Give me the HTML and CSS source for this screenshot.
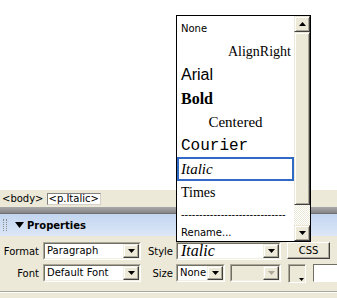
FILE: index.html
```html
<!DOCTYPE html>
<html>
<head>
<meta charset="utf-8">
<link rel="stylesheet" href="styles.css">
</head>
<body>
<div class="app">
  <div class="canvas"></div>
  <div class="tagbar">
    <span class="tag">&lt;body&gt;</span>
    <span class="tag current">&lt;p.Italic&gt;</span>
  </div>
  <div class="splitter"></div>
  <div class="panel-head">
    <span class="gripper"></span>
    <svg class="expander" width="9" height="6" viewBox="0 0 9 6"><polygon points="0,0 9,0 4.5,6" fill="#000"/></svg>
    <span class="head-title">Properties</span>
  </div>
  <div class="panel">
    <div class="row">
      <span class="lbl">Format</span>
      <div class="combo w-format"><div class="field"><span class="val">Paragraph</span><span class="drop"><svg width="7" height="4" viewBox="0 0 7 4"><polygon points="0,0 7,0 3.5,4" fill="#000"/></svg></span></div></div>
      <span class="lbl2">Style</span>
      <div class="combo w-style"><div class="field"><span class="val val-italic">Italic</span><span class="drop"><svg width="7" height="4" viewBox="0 0 7 4"><polygon points="0,0 7,0 3.5,4" fill="#000"/></svg></span></div></div>
      <button class="css-btn">CSS</button>
    </div>
    <div class="row">
      <span class="lbl">Font</span>
      <div class="combo w-format"><div class="field"><span class="val">Default Font</span><span class="drop"><svg width="7" height="4" viewBox="0 0 7 4"><polygon points="0,0 7,0 3.5,4" fill="#000"/></svg></span></div></div>
      <span class="lbl2">Size</span>
      <div class="combo w-size"><div class="field"><span class="val">None</span><span class="drop"><svg width="7" height="4" viewBox="0 0 7 4"><polygon points="0,0 7,0 3.5,4" fill="#000"/></svg></span></div></div>
      <div class="combo w-unit disabled"><div class="field"><span class="val"></span><span class="drop"><svg width="7" height="4" viewBox="0 0 7 4"><polygon points="0,0 7,0 3.5,4" fill="#aca899"/></svg></span></div></div>
      <div class="color-btn"><svg class="color-arrow" width="5" height="3" viewBox="0 0 5 3"><polygon points="0,0 5,0 2.5,3" fill="#000"/></svg></div>
      <div class="text-input"></div>
    </div>
    <div class="sep"></div>
  </div>

  <div class="dropdown">
    <div class="list">
      <div class="opt o-none">None</div>
      <div class="opt o-alignright">AlignRight</div>
      <div class="opt o-arial">Arial</div>
      <div class="opt o-bold">Bold</div>
      <div class="opt o-centered">Centered</div>
      <div class="opt o-courier">Courier</div>
      <div class="opt o-italic selected">Italic</div>
      <div class="opt o-times">Times</div>
      <div class="opt o-dash">-----------------------------</div>
      <div class="opt o-rename">Rename...</div>
    </div>
    <div class="scrollbar">
      <div class="sb-btn"><svg width="7" height="4" viewBox="0 0 7 4"><polygon points="3.5,0 7,4 0,4" fill="#000"/></svg></div>
      <div class="sb-thumb"></div>
      <div class="sb-track"></div>
      <div class="sb-btn"><svg width="7" height="4" viewBox="0 0 7 4"><polygon points="0,0 7,0 3.5,4" fill="#000"/></svg></div>
    </div>
  </div>
</div>
</body>
</html>
```

FILE: styles.css
```css
* { box-sizing: border-box; }
html, body { margin: 0; padding: 0; }
body {
  width: 337px;
  height: 298px;
  overflow: hidden;
  background: #fff;
  color: #000;
  font-family: "DejaVu Sans", Tahoma, sans-serif;
  font-size: 10px;
}
.app {
  position: relative;
  height: 298px;
  overflow: hidden;
  display: flex;
  flex-direction: column;
}
.canvas { height: 190px; background: #fff; flex: none; }

.tagbar {
  height: 17px;
  flex: none;
  background: #ece9d8;
  display: flex;
  align-items: center;
  padding-left: 1px;
  gap: 2px;
}
.tag { line-height: 12px; height: 12px; padding: 0 1px; }
.tag.current {
  background: #fff;
  border: 1px solid #808080;
  border-right-color: #d4d0c8;
  border-bottom-color: #d4d0c8;
  line-height: 10px;
  padding: 0 1px;
}

.splitter {
  height: 7px;
  flex: none;
  background: linear-gradient(#a9a9a9, #858585);
  border-bottom: 1px solid #6f6f6f;
}

.panel-head {
  height: 22px;
  flex: none;
  background: linear-gradient(#c3d5f0, #dce7f7);
  display: flex;
  align-items: center;
  padding-left: 3px;
}
.gripper {
  width: 4px;
  height: 12px;
  border-left: 1px dotted #8a8a8a;
  border-right: 1px dotted #8a8a8a;
  margin-right: 8px;
}
.expander { margin-right: 3px; }
.head-title { font-weight: bold; font-size: 10px; }

.panel {
  flex: 1;
  background: #ece9d8;
  padding-top: 6px;
  display: flex;
  flex-direction: column;
  gap: 4px;
}
.row { display: flex; align-items: center; height: 18px; }
.lbl { width: 39px; text-align: right; margin-right: 4px; }
.lbl2 { width: 32px; text-align: right; margin-right: 3px; }

.combo {
  height: 18px;
  border: 1px solid;
  border-color: #aca899 #fff #fff #aca899;
  flex: none;
}
.field {
  height: 100%;
  border: 1px solid;
  border-color: #716f64 #f1efe2 #f1efe2 #716f64;
  background: #fff;
  display: flex;
  align-items: stretch;
}
.val { flex: 1; min-width: 0; padding-left: 2px; display: flex; align-items: center; white-space: nowrap; line-height: 1; }
.val-italic { font-family: "Liberation Serif", "Times New Roman", serif; font-style: italic; font-size: 16px; padding-left: 3px; }
.drop {
  width: 16px;
  flex: none;
  background: #ece9d8;
  border: 1px solid;
  border-color: #f1efe2 #404040 #404040 #f1efe2;
  box-shadow: inset -1px -1px #aca899, inset 1px 1px #fff;
  display: flex;
  align-items: center;
  justify-content: center;
}
.w-format { width: 98px; }
.w-style { width: 105px; }
.w-size { width: 49px; margin-right: 5px; }
.w-unit { width: 51px; margin-right: 7px; }
.disabled .field { background: #ece9d8; }

.css-btn {
  margin-left: 6px;
  width: 43px;
  height: 17px;
  padding: 0;
  font: inherit;
  background: #ece9d8;
  border: 1px solid;
  border-color: #fff #404040 #404040 #fff;
  box-shadow: inset -1px -1px #aca899;
  align-self: flex-start;
  color: #000;
}

.color-btn {
  position: relative;
  width: 18px;
  height: 19px;
  flex: none;
  background: #ece9d8;
  border: 1px solid;
  border-color: #aca899 #fff #fff #aca899;
  box-shadow: inset 1px 1px #716f64;
  margin-right: 7px;
}
.color-arrow { position: absolute; right: 1px; bottom: 1px; }
.text-input {
  flex: 1;
  height: 18px;
  background: #fff;
  border: 1px solid;
  border-color: #716f64 transparent #fff #716f64;
  border-right: 0;
}

.sep {
  margin-top: 5px;
  height: 2px;
  border-top: 1px solid #aca899;
  border-bottom: 1px solid #fff;
}

/* dropdown overlay */
.dropdown {
  position: absolute;
  left: 176px;
  top: 15px;
  width: 135px;
  height: 227px;
  border: 1px solid #000;
  background: #fff;
  display: flex;
}
.list { flex: 1; min-width: 0; display: flex; flex-direction: column; }
.opt {
  display: flex;
  align-items: center;
  padding-left: 4px;
  white-space: nowrap;
  overflow: hidden;
}
.o-none { height: 24px; font-size: 10px; }
.o-alignright { height: 23px; justify-content: flex-end; padding-right: 3px; font-family: "Liberation Serif", serif; font-size: 14px; }
.o-arial { height: 24px; font-family: "Liberation Sans", Arial, sans-serif; font-size: 16px; }
.o-bold { height: 23px; font-family: "Liberation Serif", serif; font-weight: bold; font-size: 16px; }
.o-centered { height: 24px; justify-content: center; padding-left: 0; font-family: "Liberation Serif", serif; font-size: 15px; }
.o-courier { height: 23px; font-family: "Liberation Mono", "Courier New", monospace; font-size: 16px; }
.o-italic { height: 24px; font-family: "Liberation Serif", serif; font-style: italic; font-size: 15px; }
.o-italic.selected { border: 2px solid #316ac5; padding-left: 2px; }
.o-times { height: 23px; font-family: "Liberation Serif", serif; font-size: 14px; }
.o-dash { height: 20px; font-size: 10px; }
.o-rename { height: 17px; font-size: 10px; }

.scrollbar { width: 16px; flex: none; display: flex; flex-direction: column; }
.sb-btn, .sb-thumb {
  background: #ece9d8;
  border: 1px solid;
  border-color: #ece9d8 #404040 #404040 #ece9d8;
  box-shadow: inset 1px 1px #fff, inset -1px -1px #aca899;
}
.sb-btn { height: 16px; display: flex; align-items: center; justify-content: center; }
.sb-thumb { height: 173px; }
.sb-track {
  height: 20px;
  background-color: #fff;
  background-image: conic-gradient(#ece9d8 25%, #fff 0 50%, #ece9d8 0 75%, #fff 0);
  background-size: 2px 2px;
}
```
